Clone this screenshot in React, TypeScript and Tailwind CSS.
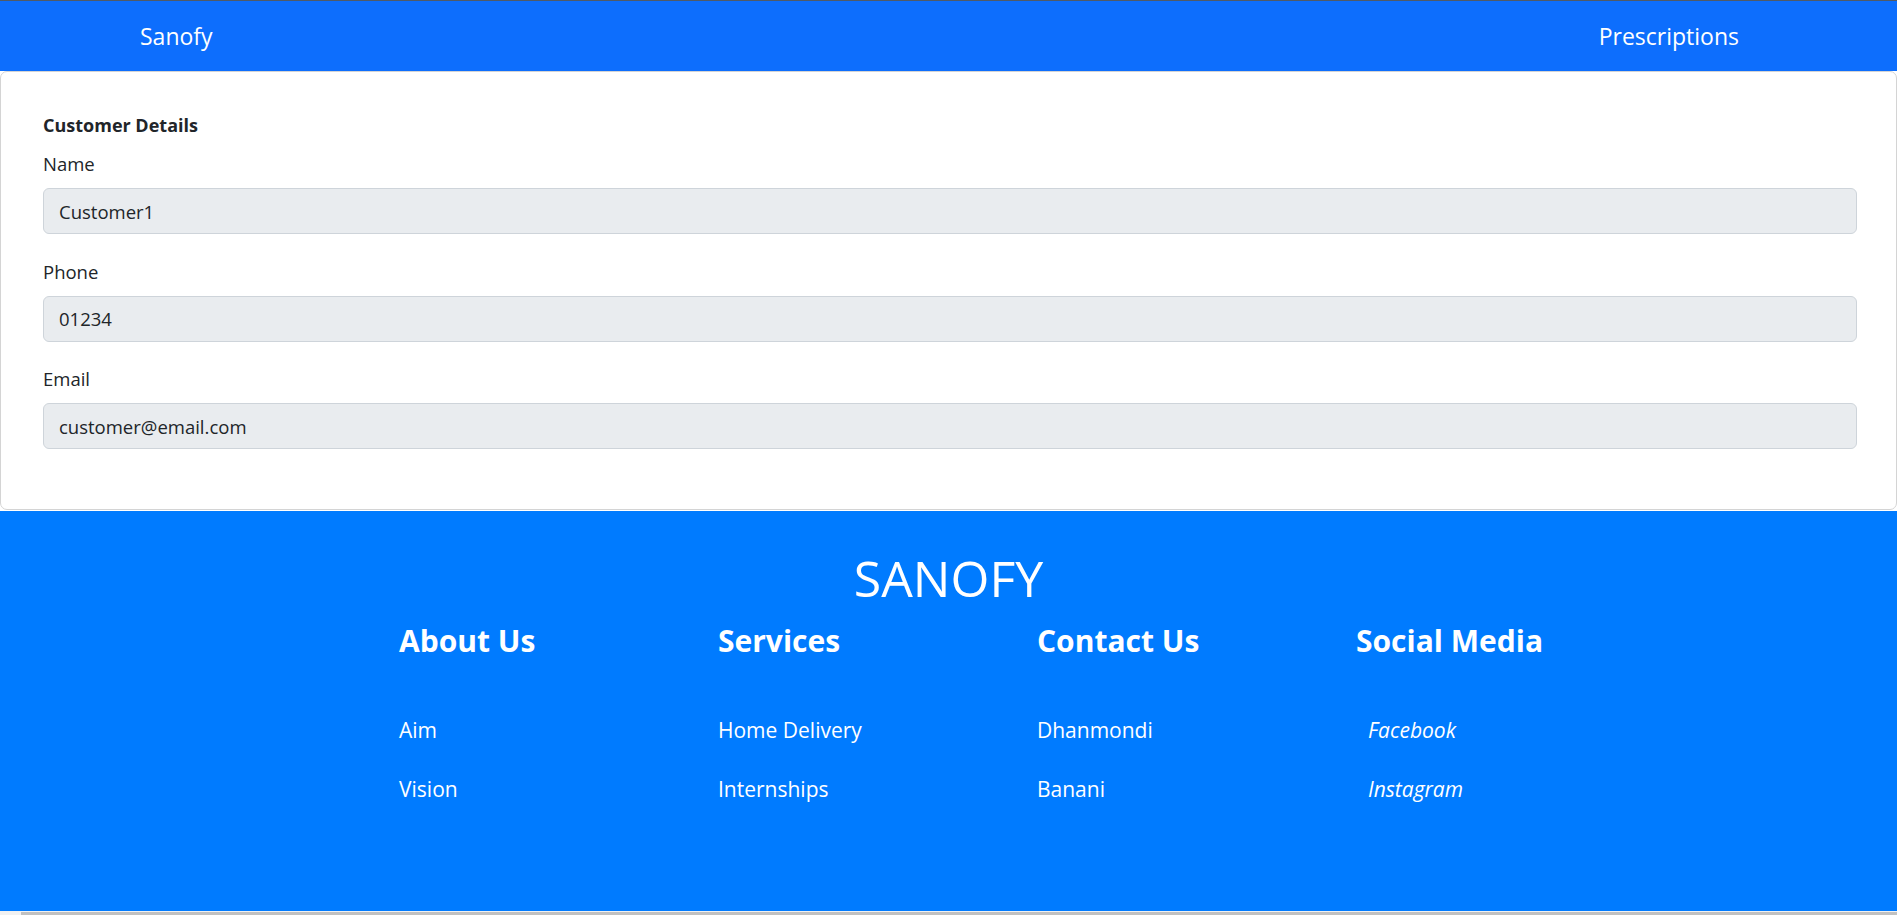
const font = { fontFamily: '"Open Sans", "Noto Sans", sans-serif' };

const fields = [
  { label: "Name", value: "Customer1" },
  { label: "Phone", value: "01234" },
  { label: "Email", value: "customer@email.com" },
];

const columns = [
  { title: "About Us", links: ["Aim", "Vision"], italic: false },
  { title: "Services", links: ["Home Delivery", "Internships"], italic: false },
  { title: "Contact Us", links: ["Dhanmondi", "Banani"], italic: false },
  { title: "Social Media", links: ["Facebook", "Instagram"], italic: true },
];

function Navbar() {
  return (
    <nav className="flex h-[70px] items-center justify-between bg-[#0d6efd] pl-[140px] pr-[158px] text-[23px] text-white">
      <a href="#">Sanofy</a>
      <a href="#">Prescriptions</a>
    </nav>
  );
}

function CustomerCard() {
  return (
    <section className="rounded-[7px] border border-[#d4d4d4] bg-white pb-[60px] pl-[42px] pr-[39px] pt-[39px] text-[#212529]">
      <h2 className="mb-[9px] text-[18px] font-bold leading-[29px]">
        Customer Details
      </h2>
      <div className="flex flex-col gap-[22.5px]">
        {fields.map((f) => (
          <div key={f.label}>
            <label className="mb-[10px] block text-[18.5px] leading-[29px]">
              {f.label}
            </label>
            <input
              readOnly
              value={f.value}
              className="block h-[46px] w-full rounded-[6px] border border-[#ced4da] bg-[#e9ecef] px-[15px] text-[18.5px] text-[#212529] outline-none"
              style={font}
            />
          </div>
        ))}
      </div>
    </section>
  );
}

function Footer() {
  return (
    <footer className="mt-[1px] h-[400px] bg-[#007bff] pt-[37px] text-white">
      <h1 className="text-center text-[50px] leading-[60px]">SANOFY</h1>
      <div className="mt-[14px] grid grid-cols-[repeat(4,319px)] pl-[399px]">
        {columns.map((c) => (
          <div key={c.title}>
            <h3 className="text-[30px] font-bold leading-[38px]">{c.title}</h3>
            <ul className="mt-[55px] flex flex-col gap-[29px]">
              {c.links.map((l) => (
                <li
                  key={l}
                  className={
                    c.italic
                      ? "pl-[12px] text-[21px] italic leading-[30px]"
                      : "text-[21px] leading-[30px]"
                  }
                >
                  {l}
                </li>
              ))}
            </ul>
          </div>
        ))}
      </div>
    </footer>
  );
}

export default function App() {
  return (
    <div className="min-h-[916px] border-t border-[#505a66] bg-white" style={font}>
      <Navbar />
      <CustomerCard />
      <Footer />
      <div className="flex h-[4px] bg-[#f1f1f1]">
        <div className="mt-[1px] ml-[21px] flex-1 bg-[#c1c1c1]" />
      </div>
    </div>
  );
}
